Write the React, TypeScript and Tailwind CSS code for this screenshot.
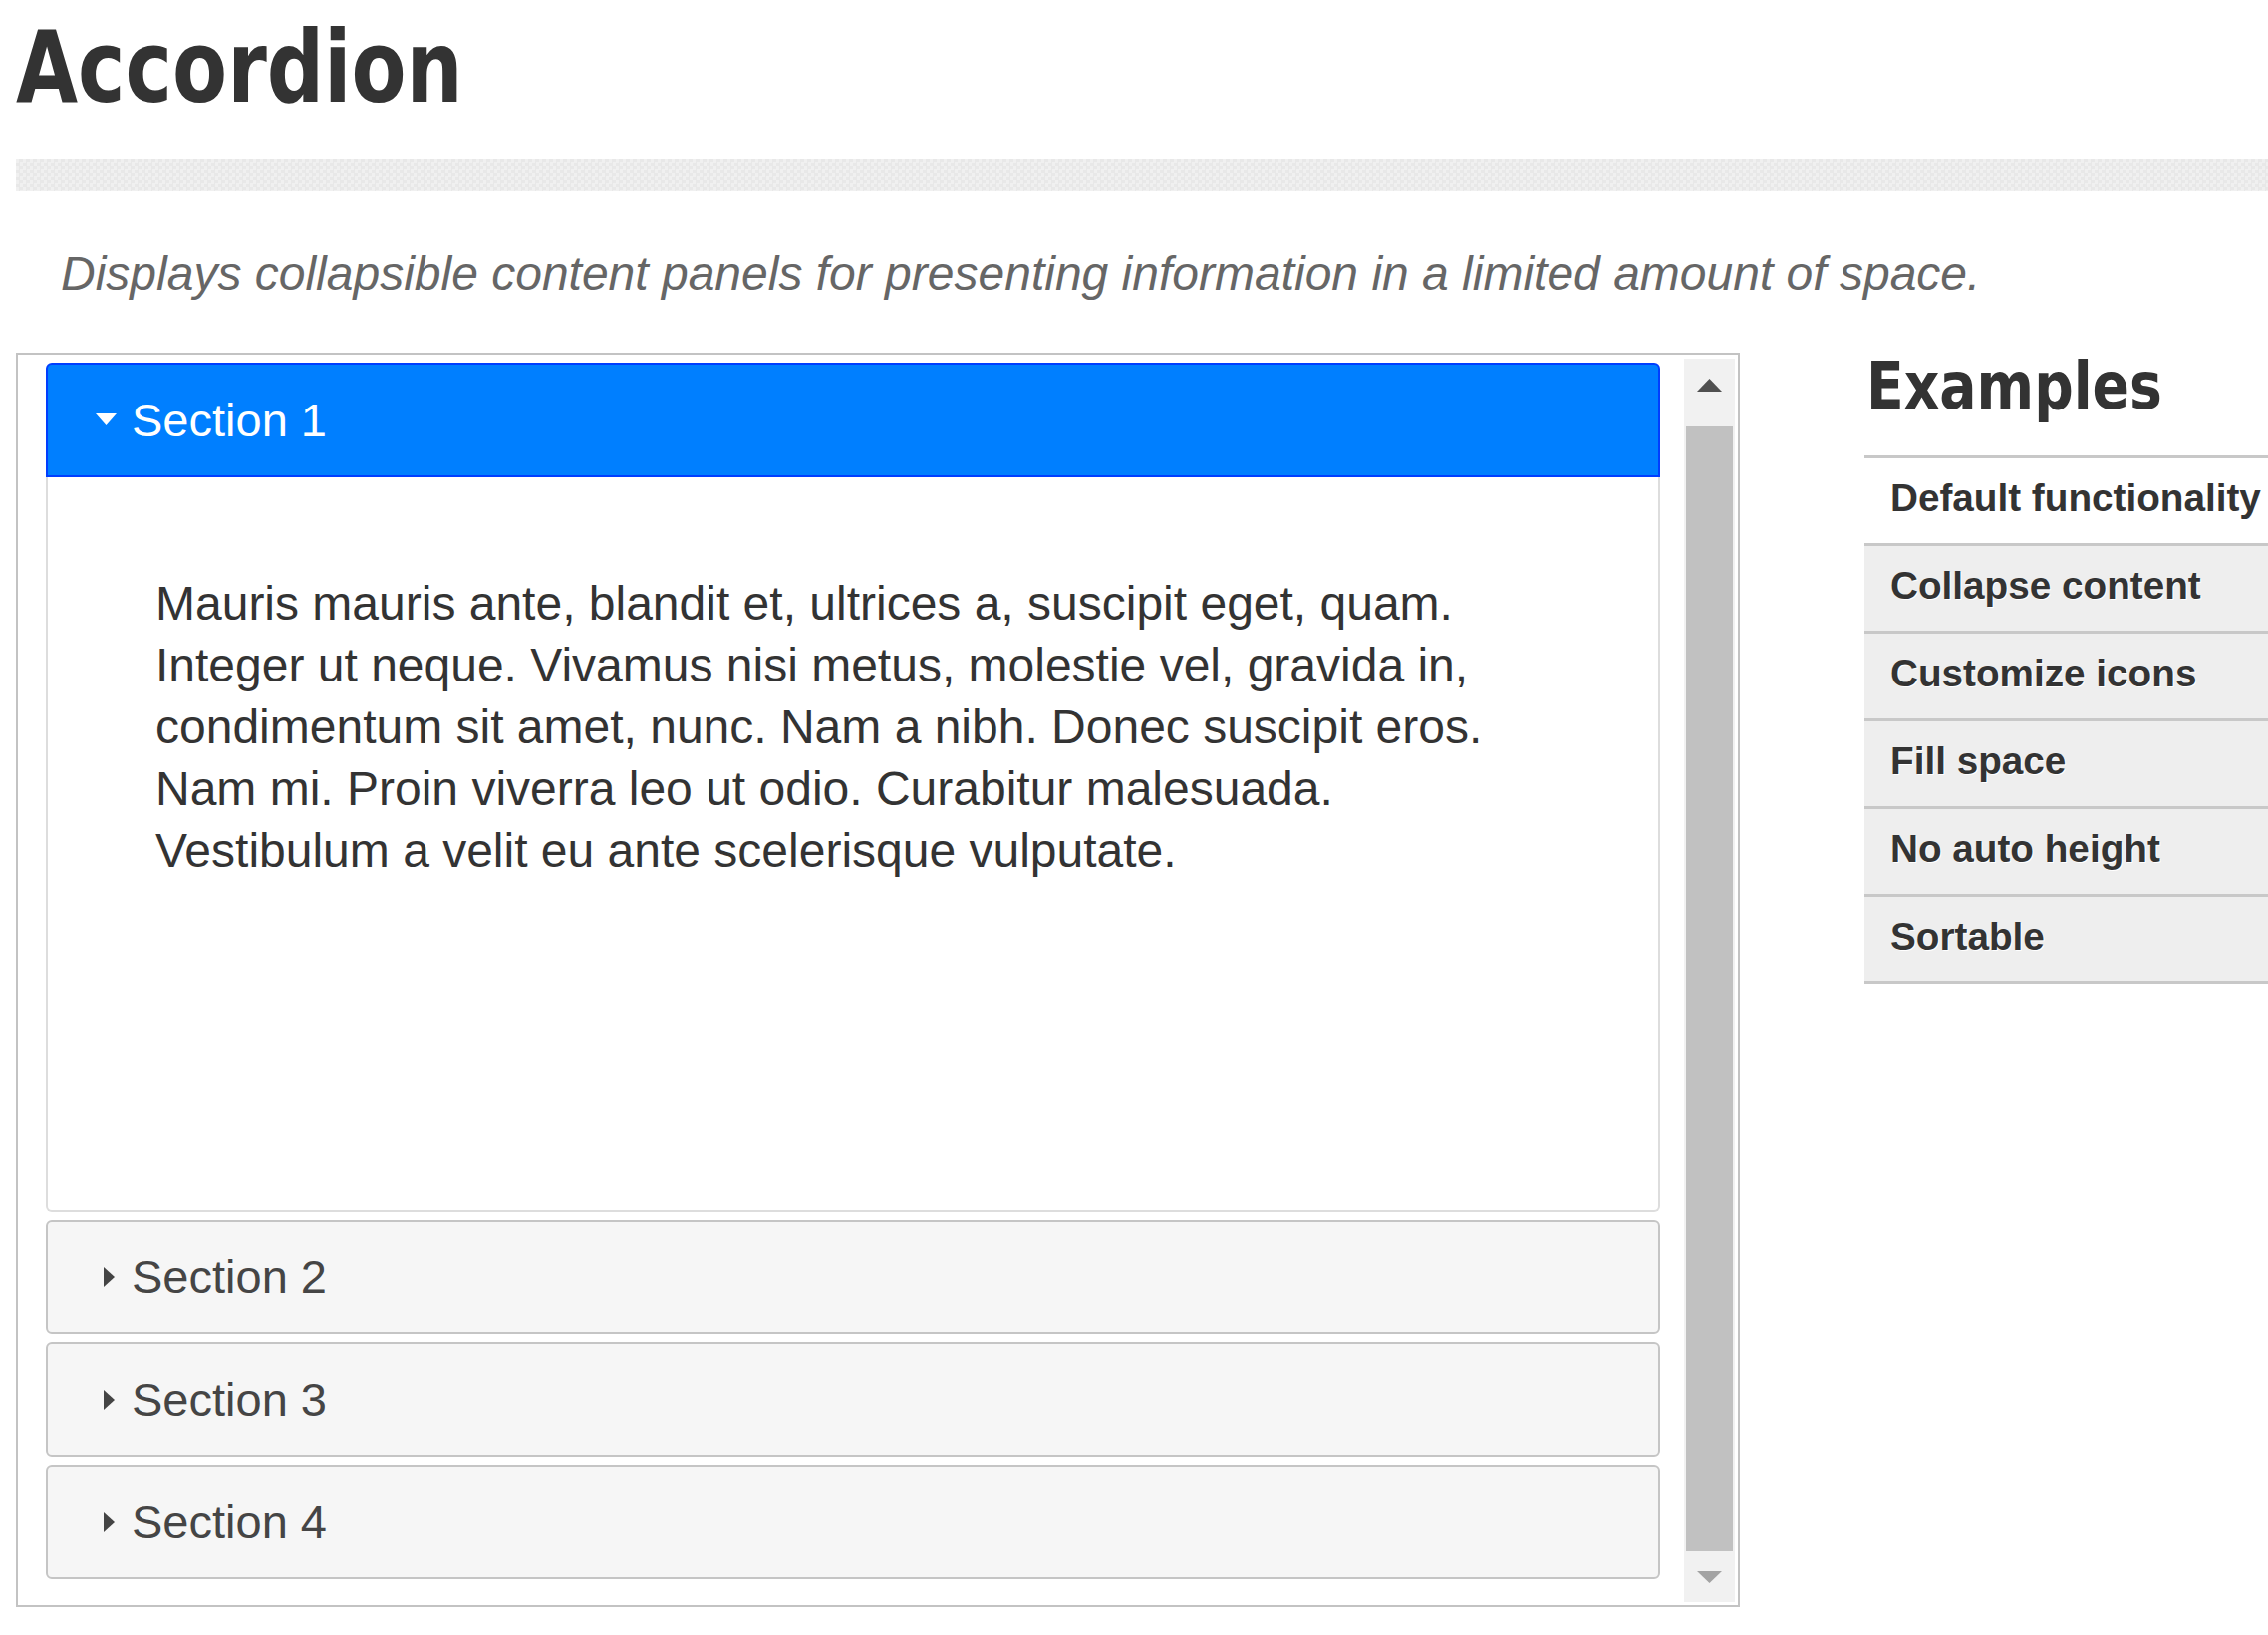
const sections = ['Section 1', 'Section 2', 'Section 3', 'Section 4']

const examples = [
  'Default functionality',
  'Collapse content',
  'Customize icons',
  'Fill space',
  'No auto height',
  'Sortable',
]

// wrapped the way the reference wraps it
const bodyLines = [
  'Mauris mauris ante, blandit et, ultrices a, suscipit eget, quam.',
  'Integer ut neque. Vivamus nisi metus, molestie vel, gravida in,',
  'condimentum sit amet, nunc. Nam a nibh. Donec suscipit eros.',
  'Nam mi. Proin viverra leo ut odio. Curabitur malesuada.',
  'Vestibulum a velit eu ante scelerisque vulputate.',
]

function CaretDown() {
  return (
    <svg width="21" height="12" viewBox="0 0 21 12" className="block">
      <polygon points="0,0 21,0 10.5,12" fill="#ffffff" />
    </svg>
  )
}

function CaretRight() {
  return (
    <svg width="11" height="20" viewBox="0 0 11 20" className="block">
      <polygon points="0,0 11,10 0,20" fill="#444444" />
    </svg>
  )
}

function Header({ label, active }: { label: string; active: boolean }) {
  if (active) {
    return (
      <div className="flex h-[115px] items-center rounded-t-[6px] border-2 border-[#003eff] bg-[#007fff] text-white">
        <span className="ml-[48px] mt-[-2px]">
          <CaretDown />
        </span>
        <span className="ml-[15px] text-[47px] leading-[47px]">{label}</span>
      </div>
    )
  }
  return (
    <div className="mt-[8px] flex h-[115px] items-center rounded-[6px] border-2 border-[#c5c5c5] bg-[#f6f6f6] text-[#454545]">
      <span className="ml-[56px]">
        <CaretRight />
      </span>
      <span className="ml-[17px] text-[47px] leading-[47px]">{label}</span>
    </div>
  )
}

function Scrollbar() {
  return (
    <div className="mb-[3px] mr-[3px] mt-[4px] flex w-[51px] shrink-0 flex-col bg-[#f1f1f1]">
      <div className="flex h-[51px] items-center justify-center">
        <svg width="25" height="13" viewBox="0 0 25 13" className="mt-[2px] block">
          <polygon points="12.5,0 25,13 0,13" fill="#505050" />
        </svg>
      </div>
      <div className="h-[17px]" />
      <div className="mx-[2px] flex-1 bg-[#c1c1c1]" />
      <div className="flex h-[51px] items-center justify-center">
        <svg width="25" height="12" viewBox="0 0 25 12" className="block">
          <polygon points="0,0 25,0 12.5,12" fill="#a3a3a3" />
        </svg>
      </div>
    </div>
  )
}

export default function App() {
  return (
    <div className="min-h-screen overflow-hidden bg-white pl-[16px] pt-[18px] [font-family:'Liberation_Sans',Arial,sans-serif] text-[#333]">
      <h1 className="origin-left scale-x-90 [font-family:'DejaVu_Sans_Condensed','DejaVu_Sans',sans-serif] text-[99px] font-bold leading-[99px] text-[#333]">
        Accordion
      </h1>

      <div className="mt-[43px] h-[32px] bg-[conic-gradient(#e8e8e8_25%,#f0f0f0_0_50%,#e8e8e8_0_75%,#f0f0f0_0)] bg-[length:7px_7px]" />

      <p className="ml-[45px] mt-[58px] text-[48px] italic leading-[50px] text-[#666]">
        Displays collapsible content panels for presenting information in a limited amount of space.
      </p>

      <div className="mt-[54px] flex items-start">
        <div className="flex h-[1259px] w-[1730px] shrink-0 border-2 border-[#c3c3c3]">
          <div className="flex flex-1 flex-col pl-[28px] pr-[24px] pt-[8px]">
            <Header label={sections[0]} active />
            <div className="h-[737px] rounded-b-[6px] border-2 border-t-0 border-[#dddddd] pl-[108px] pt-[96px] text-[48px] leading-[62px] text-[#333]">
              {bodyLines.map((line) => (
                <div key={line} className="whitespace-nowrap">
                  {line}
                </div>
              ))}
            </div>
            {sections.slice(1).map((s) => (
              <Header key={s} label={s} active={false} />
            ))}
          </div>
          <Scrollbar />
        </div>

        <div className="ml-[125px] min-w-0 flex-1 pt-[1px]">
          <h2 className="ml-[2px] origin-left scale-x-[0.93] whitespace-nowrap [font-family:'DejaVu_Sans_Condensed','DejaVu_Sans',sans-serif] text-[66px] font-bold leading-[66px] text-[#333]">
            Examples
          </h2>
          <ul className="mt-[36px] border-b-[3px] border-[#c8c8c8]">
            {examples.map((ex, i) => (
              <li
                key={ex}
                className={
                  i === 0
                    ? 'h-[88px] whitespace-nowrap border-t-[3px] border-[#c8c8c8] bg-white pl-[26px] pt-[20px] text-[38.7px] font-bold leading-[39px] text-[#333] [text-shadow:1px_1px_0_#fff]'
                    : 'h-[88px] whitespace-nowrap border-t-[3px] border-[#c8c8c8] bg-[#eeeeee] pl-[26px] pt-[20px] text-[38.7px] font-bold leading-[39px] text-[#333] [text-shadow:1px_1px_0_#fff]'
                }
              >
                {ex}
              </li>
            ))}
          </ul>
        </div>
      </div>
    </div>
  )
}
